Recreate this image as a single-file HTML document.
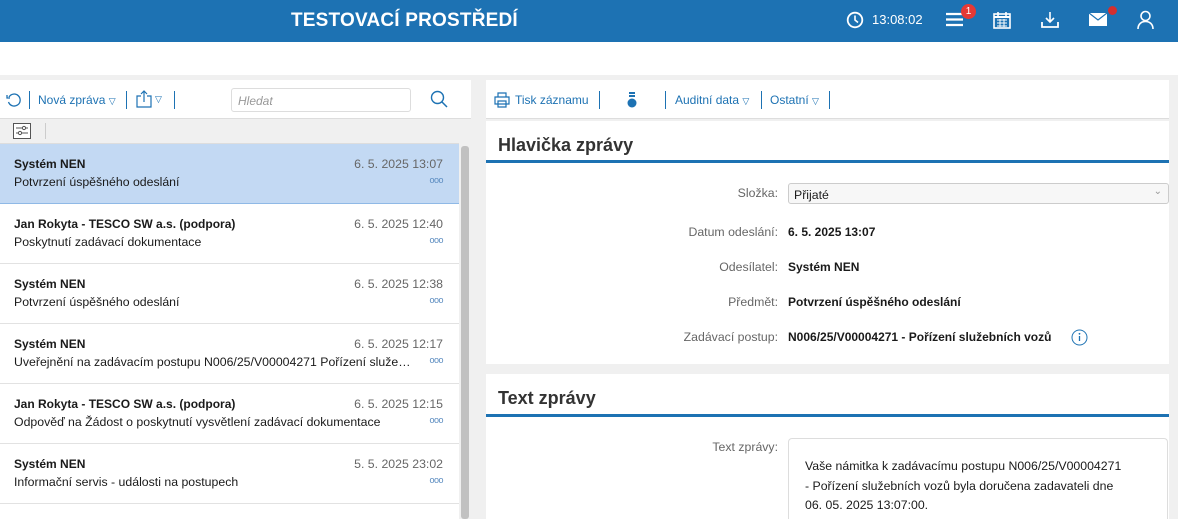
<!DOCTYPE html>
<html><head><meta charset="utf-8"><style>
*{margin:0;padding:0;box-sizing:border-box}
html,body{width:1178px;height:519px;overflow:hidden}
body{background:#f0f0f0;font-family:"Liberation Sans",Arial,sans-serif;font-size:12px;color:#1a1a1a;position:relative}
.hdr{position:absolute;left:0;top:0;width:1178px;height:42px;background:#1d72b3;color:#fff}
.title{position:absolute;left:291px;top:10px;font-size:19px;font-weight:bold;letter-spacing:.2px}
.wbar{position:absolute;left:0;top:42px;width:1178px;height:33px;background:#fff}
.abs{position:absolute}
.lt{position:absolute;left:0;top:80px;width:471px;height:39px;background:#fff;border-bottom:1px solid #ddd}
.blue{color:#1d72b3}
.sep{position:absolute;width:1px;height:18px;background:#1d72b3}
.item{position:absolute;left:0;width:459px;height:60px;background:#fff;border-bottom:1px solid #e2e2e2;overflow:hidden}
.item .n{position:absolute;left:14px;top:13px;font-weight:bold;font-size:12px}
.item .s{position:absolute;left:14px;top:31px;font-size:12.3px;white-space:nowrap;width:400px;overflow:hidden;text-overflow:ellipsis}
.item .d{position:absolute;right:16px;top:13px;color:#666;font-size:12.3px}
.item .o{position:absolute;right:16px;top:31px;color:#5b8cc0;font-size:9px;letter-spacing:-0.5px}
.card{position:absolute;left:486px;width:683px;background:#fff;overflow:hidden}
.h2{position:absolute;left:12px;font-size:18px;font-weight:bold;color:#333}
.bl{position:absolute;left:0;width:683px;height:3px;background:#1d72b3}
.lab{position:absolute;right:391px;color:#666;font-size:12.3px;text-align:right;white-space:nowrap}
.val{position:absolute;left:302px;font-weight:bold;font-size:12px;white-space:nowrap}
</style></head><body>
<div class="hdr"><div class="title">TESTOVACÍ PROSTŘEDÍ</div>
<svg class="abs" style="left:846px;top:11px" width="18" height="18" viewBox="0 0 18 18"><circle cx="9" cy="9" r="7.3" fill="none" stroke="#fff" stroke-width="1.8"/><path d="M9 4.5V9l3 2.5" fill="none" stroke="#fff" stroke-width="1.6"/></svg>
<div class="abs" style="left:872px;top:12px;font-size:13px">13:08:02</div>
<svg class="abs" style="left:946px;top:12px" width="17" height="15"><path d="M0 2h17M0 7.5h17M0 13h17" stroke="#fff" stroke-width="2.2"/></svg>
<div class="abs" style="left:961px;top:4px;width:15px;height:15px;border-radius:50%;background:#e53935;color:#fff;font-size:10px;text-align:center;line-height:15px">1</div>
<svg class="abs" style="left:993px;top:11px" width="18" height="18"><rect x="1" y="3" width="16" height="14" fill="none" stroke="#fff" stroke-width="1.6"/><path d="M1 6h16" stroke="#fff" stroke-width="2"/><path d="M5 1v4M13 1v4" stroke="#fff" stroke-width="1.6"/><path d="M4 9h10M4 12h10M4 15h10M7 8v8M11 8v8" stroke="#fff" stroke-width="1"/></svg>
<svg class="abs" style="left:1041px;top:11px" width="18" height="18"><path d="M9 1v10M5 7l4 4 4-4" fill="none" stroke="#fff" stroke-width="1.6"/><path d="M1 11v5h16v-5" fill="none" stroke="#fff" stroke-width="1.8"/></svg>
<svg class="abs" style="left:1089px;top:13px" width="18" height="13"><rect x="0" y="0" width="18" height="13" fill="#fff"/><path d="M0 0l9 7 9-7" fill="none" stroke="#1d72b3" stroke-width="1.2"/></svg>
<div class="abs" style="left:1108px;top:6px;width:9px;height:9px;border-radius:50%;background:#d32f2f"></div>
<svg class="abs" style="left:1137px;top:10px" width="17" height="19"><circle cx="8.5" cy="6" r="4.5" fill="none" stroke="#fff" stroke-width="1.6"/><path d="M1 19c0-5 3.5-7.5 7.5-7.5S16 14 16 19" fill="none" stroke="#fff" stroke-width="1.6"/></svg>
</div>
<div class="wbar"></div>
<div class="lt">
<svg class="abs" style="left:6px;top:12px" width="16" height="16"><path d="M3 5A6 6 0 1 1 2.5 10" fill="none" stroke="#1d72b3" stroke-width="1.3"/><path d="M1 3v3h3" fill="none" stroke="#1d72b3" stroke-width="1.3"/></svg>
<div class="sep" style="left:29px;top:11px"></div>
<div class="abs blue" style="left:38px;top:13px">Nová zpráva <span style="font-size:9px">▽</span></div>
<div class="sep" style="left:126px;top:11px"></div>
<svg class="abs" style="left:136px;top:10px" width="16" height="18"><path d="M5 6H1v11h14V6h-4M8 12V1M5 4l3-3 3 3" fill="none" stroke="#1d72b3" stroke-width="1.2"/></svg>
<div class="abs blue" style="left:155px;top:14px;font-size:9px">▽</div>
<div class="sep" style="left:174px;top:11px"></div>
<div class="abs" style="left:231px;top:8px;width:180px;height:24px;border:1px solid #ddd;border-radius:3px;color:#999;font-style:italic;padding:5px 6px">Hledat</div>
<svg class="abs" style="left:430px;top:10px" width="18" height="18"><circle cx="7.5" cy="7.5" r="6" fill="none" stroke="#1d72b3" stroke-width="1.4"/><path d="M12 12l5 5" stroke="#1d72b3" stroke-width="1.5"/></svg>
</div>
<svg class="abs" style="left:13px;top:123px" width="18" height="16"><rect x=".5" y=".5" width="17" height="15" fill="#fff" stroke="#555"/><path d="M3 5h12M3 10h12" stroke="#555"/><circle cx="11" cy="5" r="1.6" fill="#fff" stroke="#555"/><circle cx="7" cy="10" r="1.6" fill="#fff" stroke="#555"/></svg>
<div class="abs" style="left:45px;top:123px;width:1px;height:16px;background:#ccc"></div>
<div class="abs" style="left:0;top:143px;width:459px;height:1px;background:#ddd"></div>
<div class="item" style="top:144px;background:#c3d9f3;border-bottom:1px solid #8fb9e6"><div class="n">Systém NEN</div><div class="d">6. 5. 2025 13:07</div><div class="s">Potvrzení úspěšného odeslání</div><div class="o">ooo</div></div>
<div class="item" style="top:204px"><div class="n">Jan Rokyta - TESCO SW a.s. (podpora)</div><div class="d">6. 5. 2025 12:40</div><div class="s">Poskytnutí zadávací dokumentace</div><div class="o">ooo</div></div>
<div class="item" style="top:264px"><div class="n">Systém NEN</div><div class="d">6. 5. 2025 12:38</div><div class="s">Potvrzení úspěšného odeslání</div><div class="o">ooo</div></div>
<div class="item" style="top:324px"><div class="n">Systém NEN</div><div class="d">6. 5. 2025 12:17</div><div class="s">Uveřejnění na zadávacím postupu N006/25/V00004271 Pořízení služebních vozů</div><div class="o">ooo</div></div>
<div class="item" style="top:384px"><div class="n">Jan Rokyta - TESCO SW a.s. (podpora)</div><div class="d">6. 5. 2025 12:15</div><div class="s">Odpověď na Žádost o poskytnutí vysvětlení zadávací dokumentace</div><div class="o">ooo</div></div>
<div class="item" style="top:444px"><div class="n">Systém NEN</div><div class="d">5. 5. 2025 23:02</div><div class="s">Informační servis - události na postupech</div><div class="o">ooo</div></div>
<div class="item" style="top:504px;height:15px;border-bottom:none"><div class="n">Systém NEN</div></div>
<div class="abs" style="left:459px;top:144px;width:12px;height:375px;background:#f0f0f0"></div>
<div class="abs" style="left:461px;top:146px;width:8px;height:373px;background:#c1c1c1;border-radius:3px"></div>

<div class="abs" style="left:486px;top:80px;width:683px;height:39px;background:#fff;border-bottom:1px solid #ddd">
<svg class="abs" style="left:8px;top:12px" width="16" height="16"><path d="M4 5V1h8v4M1 5h14v7H1zM4 9h8v6H4z" fill="#fff" stroke="#1d72b3" stroke-width="1.2"/></svg>
<div class="abs blue" style="left:29px;top:13px">Tisk záznamu</div>
<div class="sep" style="left:113px;top:11px"></div>
<svg class="abs" style="left:141px;top:12px" width="10" height="16"><rect x="2" y="0" width="6" height="2" fill="#1d72b3"/><rect x="2" y="3" width="6" height="2" fill="#1d72b3"/><circle cx="5" cy="11" r="4.5" fill="#1d72b3"/></svg>
<div class="sep" style="left:179px;top:11px"></div>
<div class="abs blue" style="left:189px;top:13px">Auditní data <span style="font-size:9px">▽</span></div>
<div class="sep" style="left:275px;top:11px"></div>
<div class="abs blue" style="left:284px;top:13px">Ostatní <span style="font-size:9px">▽</span></div>
<div class="sep" style="left:343px;top:11px"></div>
</div>

<div class="card" style="top:121px;height:243px">
<div class="h2" style="top:14px">Hlavička zprávy</div>
<div class="bl" style="top:39px"></div>
<div class="lab" style="top:65px">Složka:</div>
<div class="abs" style="left:302px;top:62px;width:381px;height:21px;border:1px solid #ccc;border-radius:3px;background:#f7f7f7;padding:4px 5px;font-size:12.3px">Přijaté<span style="position:absolute;right:6px;top:2px;color:#999;font-size:10px">⌄</span></div>
<div class="lab" style="top:104px">Datum odeslání:</div><div class="val" style="top:104px">6. 5. 2025 13:07</div>
<div class="lab" style="top:139px">Odesílatel:</div><div class="val" style="top:139px">Systém NEN</div>
<div class="lab" style="top:174px">Předmět:</div><div class="val" style="top:174px">Potvrzení úspěšného odeslání</div>
<div class="lab" style="top:209px">Zadávací postup:</div><div class="val" style="top:209px">N006/25/V00004271 - Pořízení služebních vozů</div>
<svg class="abs" style="left:585px;top:208px" width="17" height="17"><circle cx="8.5" cy="8.5" r="7.5" fill="none" stroke="#1d72b3" stroke-width="1"/><path d="M8.5 7v5" stroke="#1d72b3" stroke-width="1.3"/><circle cx="8.5" cy="4.8" r=".9" fill="#1d72b3"/></svg>
</div>
<div class="card" style="top:374px;height:145px">
<div class="h2" style="top:14px">Text zprávy</div>
<div class="bl" style="top:40px"></div>
<div class="lab" style="top:66px">Text zprávy:</div>
<div class="abs" style="left:302px;top:64px;width:380px;height:81px;border:1px solid #ddd;border-bottom:none;border-radius:4px 4px 0 0;padding:18px 16px;font-size:12.3px;line-height:19.5px">Vaše námitka k zadávacímu postupu N006/25/V00004271<br>- Pořízení služebních vozů byla doručena zadavateli dne<br>06. 05. 2025 13:07:00.</div>
</div>
</body></html>
